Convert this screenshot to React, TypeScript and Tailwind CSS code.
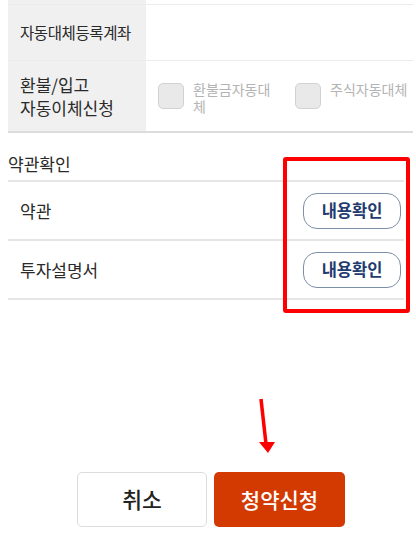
import React from "react";

const font = {
  fontFamily: '"Noto Sans CJK KR", "Noto Sans", sans-serif',
};

function CheckOption({ label, width }: { label: string; width: string }) {
  return (
    <label className="flex shrink-0 items-start gap-[9px]">
      <span className="mt-[2px] h-[26px] w-[26px] shrink-0 rounded-[5px] border border-[#d2d2d2] bg-[#e9e9e9]" />
      <span className={`${width} text-[14px] leading-[17px] text-[#b3b3b3]`}>
        {label}
      </span>
    </label>
  );
}

function TermRow({ label }: { label: string }) {
  return (
    <div className="flex h-[59px] items-center justify-between border-b-2 border-[#e6e6e6] pl-3 pr-[3px]">
      <span className="text-[17px] text-[#2a2a2a]">{label}</span>
      <button className="h-[36px] w-[98px] rounded-[14px] border-[1.5px] border-[#7d90a8] bg-white text-[16.5px] font-bold text-[#1f3b6f]">
        내용확인
      </button>
    </div>
  );
}

export default function App() {
  return (
    <div
      className="relative h-[546px] w-[416px] overflow-hidden bg-white"
      style={font}
    >
      {/* account table */}
      <div className="ml-2 w-[405px]">
        <div className="flex h-[5px] border-b border-[#ececec]">
          <div className="w-[138px] shrink-0 bg-[#f0f0f0]" />
        </div>
        <div className="flex h-[56px] border-b border-[#ececec]">
          <div className="flex w-[138px] shrink-0 items-center bg-[#f0f0f0] pl-3 text-[15.5px] tracking-[-0.4px] text-[#2a2a2a]">
            자동대체등록계좌
          </div>
          <div className="flex-1" />
        </div>
        <div className="flex h-[72px] border-b-2 border-[#dcdcdc]">
          <div className="flex w-[138px] shrink-0 flex-col justify-center bg-[#f0f0f0] pl-3 text-[17px] leading-[23px] text-[#2a2a2a]">
            <span className="block">환불/입고</span>
            <span className="block">자동이체신청</span>
          </div>
          <div className="flex min-w-0 flex-1 items-start gap-[22px] pl-3 pt-[20px]">
            <CheckOption label="환불금자동대체" width="w-[80px]" />
            <CheckOption label="주식자동대체" width="whitespace-nowrap" />
          </div>
        </div>
      </div>

      {/* terms */}
      <div className="ml-2 mt-[19px] w-[396px]">
        <div className="border-b-2 border-[#e6e6e6] pb-[4px] text-[17px] leading-[24px] text-[#2a2a2a]">
          약관확인
        </div>
        <TermRow label="약관" />
        <TermRow label="투자설명서" />
      </div>

      {/* highlight box */}
      <div className="absolute left-[283px] top-[157px] h-[156px] w-[127px] rounded-[3px] border-4 border-[#ff0000]" />

      {/* arrow */}
      <svg
        className="absolute left-[255px] top-[396px]"
        width="24"
        height="60"
        viewBox="0 0 24 60"
      >
        <line x1="6" y1="3" x2="11" y2="48" stroke="#ff0000" strokeWidth="3.5" />
        <polygon points="4,46 20,46 13,57" fill="#ff0000" />
      </svg>

      {/* actions */}
      <div className="mt-[172px] flex gap-[7px] pl-[77px]">
        <button className="h-[55px] w-[130px] rounded-[5px] border border-[#dcdcdc] bg-white text-[21.5px] font-medium text-[#222]">
          취소
        </button>
        <button className="h-[55px] w-[131px] rounded-[5px] bg-[#d23a02] text-[21px] font-medium text-white">
          청약신청
        </button>
      </div>
    </div>
  );
}
